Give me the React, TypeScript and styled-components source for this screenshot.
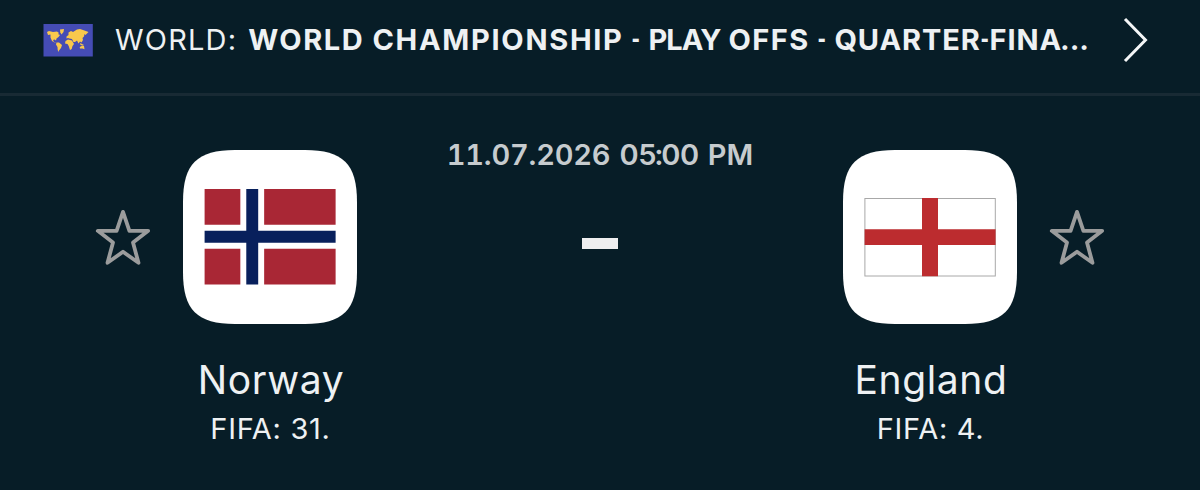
import React from "react";
import styled, { createGlobalStyle } from "styled-components";

const GlobalStyle = createGlobalStyle`
  *, *::before, *::after { box-sizing: border-box; }
  html, body { margin: 0; padding: 0; background: #071d27; }
`;

const Screen = styled.main`
  width: 1200px;
  height: 490px;
  overflow: hidden;
  background: #071d27;
  color: #eef1f3;
  font-family: Inter, "Liberation Sans", sans-serif;
`;

const LeagueBar = styled.header`
  display: flex;
  align-items: center;
  height: 96px;
  padding: 0 52px 13px 43px;
  border-bottom: 3px solid #182a34;
`;

const LeagueTitle = styled.div`
  display: flex;
  flex: 1;
  align-items: baseline;
  gap: 11px;
  margin-left: 22px;
  font-size: 29px;
  line-height: 40px;
  white-space: nowrap;
`;

const Country = styled.span`
  letter-spacing: 1.2px;
`;

const League = styled.span`
  display: flex;
  align-items: baseline;
  gap: 8px;
  font-weight: 650;
`;

const Word = styled.span<{ $tracking: number }>`
  letter-spacing: ${(p) => p.$tracking}px;
`;

const Dash = styled.span`
  display: inline-block;
  margin: 0 -1.3px;
  font-family: Roboto, "Liberation Sans", sans-serif;
  font-weight: 700;
  letter-spacing: 0;
  transform: translateY(-1px) scaleX(0.75);
`;

const Dots = styled.span`
  margin-left: -2px;
  letter-spacing: 0;
`;

const Colon = styled.span`
  margin: 0 -2px;
`;

const Match = styled.section`
  display: grid;
  grid-template-columns: 56px 174px 486px 174px 56px;
  justify-content: center;
  padding-top: 54px;
`;

const StarCell = styled.div<{ $side: "left" | "right" }>`
  display: flex;
  justify-content: ${(p) => (p.$side === "left" ? "flex-start" : "flex-end")};
  margin: 59px ${(p) => (p.$side === "left" ? "32px 0 -32px" : "-32px 0 32px")};
`;

const Team = styled.div`
  display: flex;
  flex-direction: column;
  align-items: center;
  white-space: nowrap;
`;

const TeamName = styled.div`
  margin-top: 32px;
  padding-left: 2px;
  font-size: 39px;
  line-height: 48px;
  letter-spacing: 0.6px;
`;

const Ranking = styled.div`
  margin-top: 7px;
  padding-left: 1px;
  font-size: 29px;
  line-height: 36px;
  letter-spacing: 0.7px;
`;

const Center = styled.div`
  display: flex;
  flex-direction: column;
  align-items: center;
`;

const Kickoff = styled.time`
  display: flex;
  gap: 9px;
  margin-top: -13px;
  font-size: 29px;
  font-weight: 600;
  line-height: 36px;
  color: #c6cbce;
  white-space: nowrap;
`;

const KickoffDate = styled(Word)`
  font-variant-numeric: tabular-nums;
`;

const ScoreDash = styled.div`
  width: 36px;
  height: 11px;
  margin-top: 65px;
  background: #eeeeef;
`;

const WorldFlag = () => (
  <svg width="50" height="33" viewBox="0 0 50 33">
    <rect x="0.5" width="49.3" height="32.5" fill="#454cb5" />
    <g fill="#f9c84c">
      <path d="M4 8 L6 7 L10 8 L14 7.5 L16 9 L15 10 L17 11 L15.5 13 L13.5 14.5 L13 16.5 L11.5 15.5 L10 16 L11 18 L13 18.8 L12 18.8 L9 17 L7.5 13.5 L7.5 10.5 L5 11Z" />
      <path d="M17 5.5 L21 5 L20.5 8 L18.5 10.5 L17.3 8.5Z" />
      <path d="M13.5 18.5 L16 18.5 L19 21 L18 24 L16 26.5 L15.5 28 L14.7 26 L14.5 23 L13 20.5Z" />
      <path d="M22.5 17 L25 15.5 L29 16.5 L31 20 L29.5 22 L28.7 25 L27 26 L25.7 22 L24.5 20 L22 19.5Z" />
      <path d="M23.5 14.5 L23.5 12.5 L25.5 11 L25.5 8.5 L28 7 L30 8 L34 5.5 L37 5 L40 6 L45.5 8 L44 9.5 L42.5 11 L41.5 10 L41 12.5 L39.5 14 L40 16 L38.5 18.5 L37 17.5 L35.5 19.5 L34 16.5 L32 18 L30.5 18 L29 15 L26.5 14.5 L25 14Z" />
      <path d="M37 19 L39 20 L41 21 L40 21.5 L37.5 21Z M36.7 23 L39 21.8 L41 22 L41.5 25.3 L39.5 24.5 L37 24.5Z" />
    </g>
  </svg>
);

const Chevron = () => (
  <svg width="25" height="46" viewBox="0 0 25 46" fill="none" stroke="#f4f6f7" strokeWidth="3">
    <path d="M2 2 L22.5 23 L2 44" />
  </svg>
);

const Star = () => (
  <svg width="56" height="58" viewBox="0 0 56 58" fill="none" stroke="#9b9c9c" strokeWidth="3.8" strokeLinejoin="round">
    <path d="M28 2.9 L34.4 21.8 L53.2 21.8 L38 33.6 L43.5 53.8 L28 42.8 L12.5 53.8 L18 33.6 L2.8 21.8 L21.6 21.8Z" />
  </svg>
);

const Badge = ({ children }: { children: React.ReactNode }) => (
  <svg width="174" height="174" viewBox="0 0 174 174">
    <path
      fill="#fff"
      d="M52 0 H122 C160 0 174 14 174 52 V122 C174 160 160 174 122 174 H52 C14 174 0 160 0 122 V52 C0 14 14 0 52 0Z"
    />
    {children}
  </svg>
);

const NorwayFlag = () => (
  <g transform="translate(21.6 39.1) scale(5.955)">
    <path fill="#a92735" d="M0 0H6V6H0Z M10 0H22V6H10Z M0 10H6V16H0Z M10 10H22V16H10Z" />
    <path fill="#08205c" d="M7 0H9V7H22V9H9V16H7V9H0V7H7Z" />
  </g>
);

const EnglandFlag = () => (
  <g>
    <rect x="21.9" y="48.5" width="130.4" height="77.5" fill="#fff" stroke="#a8a8a8" strokeWidth="1" />
    <path fill="#bc2c2f" d="M79 48H95V79.2H152.6V95H95V126.2H79V95H21.6V79.2H79Z" />
  </g>
);

export default function App() {
  return (
    <Screen>
      <GlobalStyle />
      <LeagueBar>
        <WorldFlag />
        <LeagueTitle>
          <Country>WORLD:</Country>
          <League>
            <Word $tracking={1.6}>WORLD</Word>
            <Word $tracking={1.7}>CHAMPIONSHIP</Word>
            <Dash>-</Dash>
            <Word $tracking={-0.9}>PLAY</Word>
            <Word $tracking={1.4}>OFFS</Word>
            <Dash>-</Dash>
            <Word $tracking={0.9}>
              QUARTER<Dash>-</Dash>FINA<Dots>...</Dots>
            </Word>
          </League>
        </LeagueTitle>
        <Chevron />
      </LeagueBar>
      <Match>
        <StarCell $side="left">
          <Star />
        </StarCell>
        <Team>
          <Badge>
            <NorwayFlag />
          </Badge>
          <TeamName>Norway</TeamName>
          <Ranking>FIFA: 31.</Ranking>
        </Team>
        <Center>
          <Kickoff>
            <KickoffDate $tracking={-0.2}>11.07.2026</KickoffDate>
            <Word $tracking={-0.3}>
              05<Colon>:</Colon>00
            </Word>
            <Word $tracking={0}>PM</Word>
          </Kickoff>
          <ScoreDash />
        </Center>
        <Team>
          <Badge>
            <EnglandFlag />
          </Badge>
          <TeamName>England</TeamName>
          <Ranking>FIFA: 4.</Ranking>
        </Team>
        <StarCell $side="right">
          <Star />
        </StarCell>
      </Match>
    </Screen>
  );
}
